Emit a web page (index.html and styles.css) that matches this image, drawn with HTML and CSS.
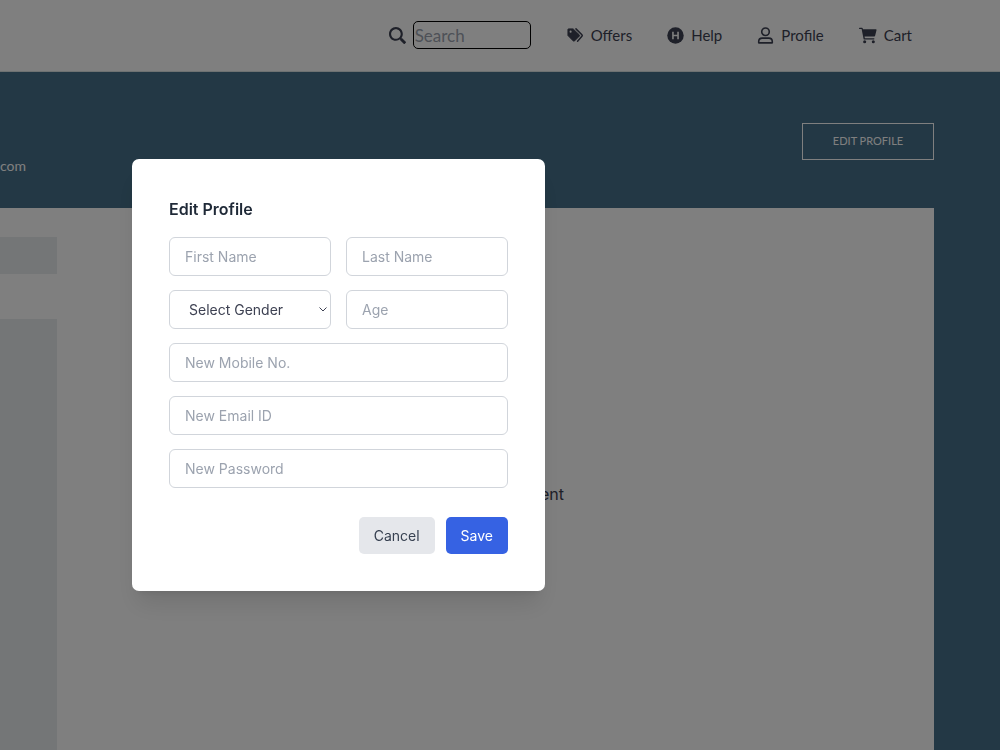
FILE: index.html
```html
<!DOCTYPE html>
<html lang="en">
<head>
<meta charset="utf-8">
<meta name="viewport" content="width=device-width, initial-scale=1">
<title>Edit Profile</title>
<link rel="stylesheet" href="styles.css">
</head>
<body>
<div class="page">
  <header class="header">
    <form class="search">
      <label for="search"><svg class="search-icon" viewBox="0 0 512 512" fill="currentColor" aria-hidden="true"><path d="M505 442.700L405.300 343c-4.500-4.500-10.600-7-17-7H372c27.600-35.300 44-79.700 44-128C416 93.100 322.900 0 208 0S0 93.100 0 208s93.100 208 208 208c48.300 0 92.700-16.400 128-44v16.300c0 6.400 2.500 12.500 7 17l99.700 99.700c9.400 9.400 24.600 9.400 33.900 0l28.300-28.300c9.400-9.400 9.400-24.600.1-34zM208 352c-79.500 0-144-64.500-144-144S128.500 64 208 64s144 64.500 144 144-64.500 144-144 144z"/></svg></label>
      <input class="search-input" id="search" type="text" placeholder="Search" aria-label="Search">
    </form>
    <nav class="nav">
      <a class="nav-link" href="#"><svg class="nav-icon" viewBox="0 0 18 16" fill="none" stroke="currentColor" aria-hidden="true"><path d="M1 1.500Q1 1 1.500 1H6.500L13 7.300Q13.700 8 13 8.700L8 13.700Q7.300 14.300 6.600 13.700L1 8Z" fill="currentColor" stroke-linejoin="round"/><circle cx="3.800" cy="3.900" r="1.100" fill="#fff" stroke="none"/><path d="M9.500 1L15.800 7.200Q16.600 8 15.800 8.900L11.200 14" stroke-width="1.600" stroke-linecap="round"/></svg>Offers</a>
      <a class="nav-link" href="#"><svg class="nav-icon" viewBox="0 0 18 18" aria-hidden="true"><circle cx="9" cy="9" r="8.700" fill="currentColor"/><path d="M6.300 5V13M11.700 5V13M6.300 9H11.700" fill="none" stroke="#fff" stroke-width="1.700"/></svg>Help</a>
      <a class="nav-link" href="#"><svg class="nav-icon" viewBox="0 0 18 18" fill="none" stroke="currentColor" stroke-width="1.700" aria-hidden="true"><circle cx="9" cy="5" r="4"/><path d="M1.800 16.800V15.500Q1.800 11.800 5.500 11.800H12.500Q16.200 11.800 16.200 15.500V16.800Z" stroke-linejoin="round"/></svg>Profile</a>
      <a class="nav-link" href="#"><svg class="nav-icon cart" viewBox="0 0 20 18" fill="currentColor" aria-hidden="true"><path d="M.7.500H3.300Q4 .5 4.200 1.200L4.400 2H18.800Q19.700 2 19.500 2.800L17.900 9.300Q17.700 10 17 10H6.200L6.500 12H16.600Q17.200 12 17.200 12.700T16.600 13.400H5.900Q5.200 13.400 5.100 12.800L2.900 1.900H.7Q0 1.900 0 1.200T.7.500Z"/><circle cx="6.300" cy="16" r="1.700"/><circle cx="15.900" cy="16" r="1.700"/></svg>Cart</a>
    </nav>
  </header>
  <main class="account">
    <div class="banner">
      <p class="email">com</p>
      <button class="edit-button" type="button">EDIT PROFILE</button>
    </div>
    <section class="panel">
      <div class="sidebar"><div class="sidebar-active"></div></div>
      <p class="content-text">ent</p>
    </section>
  </main>
</div>
<div class="overlay">
  <form class="modal" role="dialog" aria-labelledby="title">
    <h2 class="title" id="title">Edit Profile</h2>
    <div class="fields">
      <input class="field" type="text" placeholder="First Name" aria-label="First Name">
      <input class="field" type="text" placeholder="Last Name" aria-label="Last Name">
      <div class="select-box">
        <select class="field select" aria-label="Select Gender"><option>Select Gender</option></select>
        <svg class="chevron" viewBox="0 0 8 5" fill="none" stroke="currentColor" aria-hidden="true"><path d="M.5.500L4 4L7.500.5"/></svg>
      </div>
      <input class="field" type="text" placeholder="Age" aria-label="Age">
      <input class="field wide" type="tel" placeholder="New Mobile No." aria-label="New Mobile No.">
      <input class="field wide" type="email" placeholder="New Email ID" aria-label="New Email ID">
      <input class="field wide" type="password" placeholder="New Password" aria-label="New Password">
    </div>
    <div class="actions">
      <button class="button cancel" type="button">Cancel</button>
      <button class="button save" type="button">Save</button>
    </div>
  </form>
</div>
</body>
</html>
```
FILE: styles.css
```css
*, *::before, *::after { box-sizing: border-box; }
body, p, h2 { margin: 0; }
body {
  font-family: Inter, sans-serif;
  font-size: 15px;
  color: #3d4152;
  background: #46708a;
}
button, input, select { font: inherit; color: inherit; }
.page { display: flex; flex-direction: column; min-height: 100vh; }

.header {
  display: flex;
  justify-content: flex-end;
  align-items: center;
  gap: 36px;
  padding: 21px 88px 22px 16px;
  background: #fff;
  border-bottom: 1px solid #dde4e4;
  font-family: Lato, sans-serif;
}
.search { display: flex; align-items: center; gap: 7px; }
.search-icon { display: block; width: 17px; height: 17px; }
.search-input {
  width: 118px;
  height: 28px;
  padding: 0 1px;
  border: 1px solid #000;
  border-radius: 5px;
  background: transparent;
  font-size: 17px;
}
.search-input::placeholder { color: #9ca3af; opacity: 1; }
.nav { display: flex; gap: 35px; }
.nav-link {
  display: flex;
  align-items: center;
  gap: 7px;
  color: inherit;
  text-decoration: none;
}
.nav-icon { width: 17px; height: 17px; }
.cart { width: 18px; }

.account { flex: 1; display: flex; flex-direction: column; padding-right: 66px; }
.banner {
  display: flex;
  justify-content: space-between;
  align-items: flex-start;
  padding: 51px 0 33px;
}
.email {
  padding-top: 34px;
  color: #fff;
  font-family: Lato, sans-serif;
  font-size: 14px;
  line-height: 18px;
}
.edit-button {
  width: 132px;
  height: 37px;
  padding: 0 0 2px;
  border: 1px solid #fff;
  background: transparent;
  color: #fff;
  font-family: Lato, sans-serif;
  font-size: 11px;
}
.panel { flex: 1; display: flex; padding-top: 29px; background: #fff; }
.sidebar { width: 57px; padding-top: 37px; background: #e9ecef; }
.sidebar-active { height: 45px; background: #fff; }
.content-text { padding: 246px 0 0 483px; font-size: 16px; line-height: 22px; }

.overlay {
  position: fixed;
  inset: 0;
  display: flex;
  align-items: center;
  padding-left: 132px;
  background: rgba(0, 0, 0, 0.5);
}
.modal {
  width: 413px;
  padding: 37px;
  border-radius: 7px;
  background: #fff;
  box-shadow: 0 18px 23px -5px rgba(0, 0, 0, 0.1), 0 7px 9px -6px rgba(0, 0, 0, 0.1);
}
.title { margin-bottom: 15px; color: #1f2937; font-size: 16px; font-weight: 600; line-height: 26px; }
.fields { display: grid; grid-template-columns: 1fr 1fr; gap: 14px 15px; }
.field {
  width: 100%;
  min-width: 0;
  height: 39px;
  padding: 0 15px;
  border: 1px solid #d1d5db;
  border-radius: 6px;
  background: #fff;
  font-size: 14px;
}
.field::placeholder { color: #9ca3af; opacity: 1; }
.wide { grid-column: 1 / -1; }
.select-box { position: relative; }
.select { display: block; appearance: none; padding-left: 19px; }
.chevron { position: absolute; right: 4px; top: 17px; width: 8px; height: 5px; pointer-events: none; }
.actions { display: flex; justify-content: flex-end; gap: 11px; margin-top: 29px; }
.button {
  height: 37px;
  padding: 0 15px;
  border: 0;
  border-radius: 5px;
  font-size: 14px;
}
.cancel { background: #e5e7eb; color: #374151; }
.save { background: #3662e3; color: #fff; }
```
